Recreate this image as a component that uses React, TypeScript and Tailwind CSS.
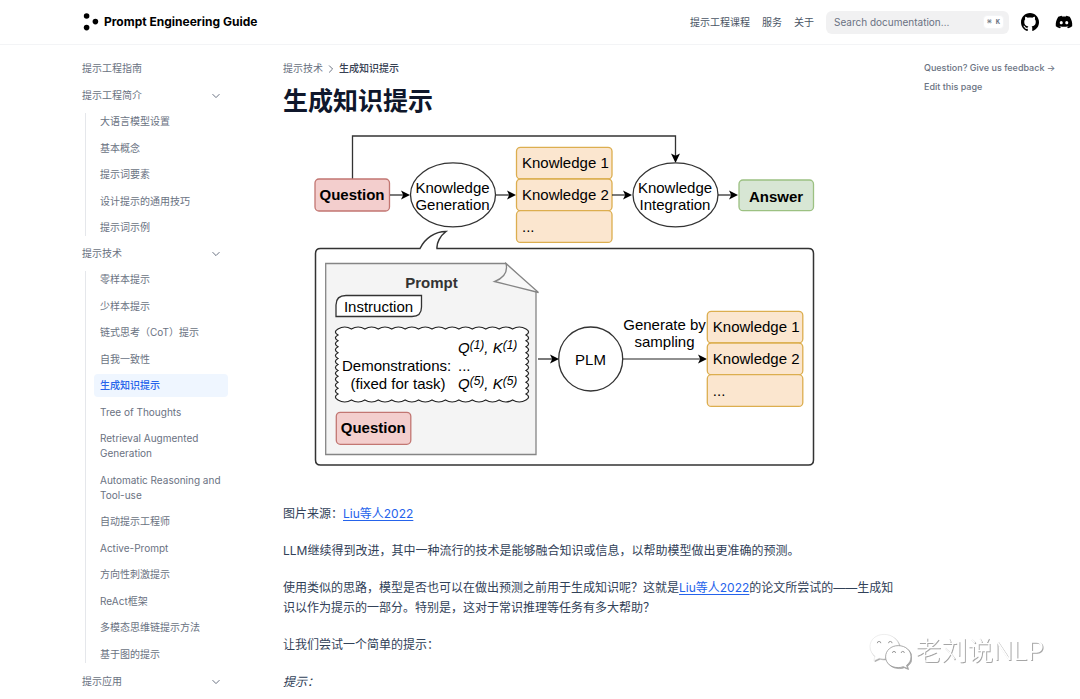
import React from 'react';
import { FaDiscord } from 'react-icons/fa6';

// ============================================
// DATA
// ============================================

interface NavItem {
  label: string;
  children?: string[];
  collapsible?: boolean;
}

const ACTIVE_PAGE = '生成知识提示';

const SIDEBAR: NavItem[] = [
  { label: '提示工程指南' },
  {
    label: '提示工程简介',
    collapsible: true,
    children: ['大语言模型设置', '基本概念', '提示词要素', '设计提示的通用技巧', '提示词示例'],
  },
  {
    label: '提示技术',
    collapsible: true,
    children: [
      '零样本提示',
      '少样本提示',
      '链式思考（CoT）提示',
      '自我一致性',
      '生成知识提示',
      'Tree of Thoughts',
      'Retrieval Augmented Generation',
      'Automatic Reasoning and Tool-use',
      '自动提示工程师',
      'Active-Prompt',
      '方向性刺激提示',
      'ReAct框架',
      '多模态思维链提示方法',
      '基于图的提示',
    ],
  },
  { label: '提示应用', collapsible: true },
];

const TOP_LINKS = ['提示工程课程', '服务', '关于'];

// ============================================
// ICONS
// ============================================

const LogoDots: React.FC = () => (
  <svg className="h-5 w-4" viewBox="0 0 16 20" fill="black" aria-hidden="true">
    <circle cx="3.6" cy="4" r="2.8" />
    <circle cx="12.4" cy="9.6" r="2.8" />
    <circle cx="3.6" cy="15.6" r="2.8" />
  </svg>
);

const GithubIcon: React.FC = () => (
  <svg className="size-[18px]" viewBox="3 3 18 18" fill="currentColor" aria-hidden="true">
    <path d="M12 3C7.0275 3 3 7.12937 3 12.2276C3 16.3109 5.57625 19.7597 9.15374 20.9824C9.60374 21.0631 9.77249 20.7863 9.77249 20.5441C9.77249 20.3249 9.76125 19.5982 9.76125 18.8254C7.5 19.2522 6.915 18.2602 6.735 17.7412C6.63375 17.4759 6.19499 16.6569 5.8125 16.4378C5.4975 16.2647 5.0475 15.838 5.80124 15.8264C6.51 15.8149 7.01625 16.4954 7.18499 16.7723C7.99499 18.1679 9.28875 17.7758 9.80625 17.5335C9.885 16.9337 10.1212 16.53 10.38 16.2993C8.3775 16.0687 6.285 15.2728 6.285 11.7432C6.285 10.7397 6.63375 9.9092 7.20749 9.26326C7.1175 9.03257 6.8025 8.08674 7.2975 6.81794C7.2975 6.81794 8.05125 6.57571 9.77249 7.76377C10.4925 7.55615 11.2575 7.45234 12.0225 7.45234C12.7875 7.45234 13.5525 7.55615 14.2725 7.76377C15.9937 6.56418 16.7475 6.81794 16.7475 6.81794C17.2424 8.08674 16.9275 9.03257 16.8375 9.26326C17.4113 9.9092 17.76 10.7281 17.76 11.7432C17.76 15.2843 15.6563 16.0687 13.6537 16.2993C13.98 16.5877 14.2613 17.1414 14.2613 18.0065C14.2613 19.2407 14.25 20.2326 14.25 20.5441C14.25 20.7863 14.4188 21.0746 14.8688 20.9824C16.6554 20.364 18.2079 19.1866 19.3078 17.6162C20.4077 16.0457 20.9995 14.1611 21 12.2276C21 7.12937 16.9725 3 12 3Z" />
  </svg>
);

const Chevron: React.FC<{ className?: string }> = ({ className = '' }) => (
  <svg className={`size-2 shrink-0 ${className}`} viewBox="0 0 8 8" fill="none" stroke="currentColor" aria-hidden="true">
    <path d="M0.8 2.4L4 5.6L7.2 2.4" strokeLinecap="round" strokeLinejoin="round" />
  </svg>
);

// ============================================
// HEADER
// ============================================

const Header: React.FC = () => (
  <header className="flex h-[45px] items-center border-b border-gray-100 pr-[7px] pl-[83px]">
    <a href="#" className="mr-auto flex items-center gap-[5px] text-[12px] font-bold text-black">
      <LogoDots />
      Prompt Engineering Guide
    </a>
    <nav className="flex gap-3 text-[10px] text-gray-600">
      {TOP_LINKS.map((link) => (
        <a key={link} href="#">
          {link}
        </a>
      ))}
    </nav>
    <label className="ml-3 flex h-[23px] w-[183px] items-center rounded-md bg-[#f1f1f2] pr-[5px] pl-2">
      <input
        type="search"
        placeholder="Search documentation…"
        aria-label="Search documentation"
        className="min-w-0 flex-1 bg-transparent text-[10px] text-gray-700 outline-none placeholder:text-gray-500"
      />
      <kbd className="flex h-[14px] items-center rounded-sm border border-gray-100 bg-white px-[3px] font-['DejaVu_Sans_Mono',monospace] text-[7px] font-bold text-gray-500">
        ⌘ K
      </kbd>
    </label>
    <a href="#" className="ml-3 text-black" aria-label="GitHub">
      <GithubIcon />
    </a>
    <a href="#" className="ml-4 text-black" aria-label="Discord">
      <FaDiscord className="size-[18px]" />
    </a>
  </header>
);

// ============================================
// SIDEBAR
// ============================================

const Sidebar: React.FC = () => (
  <aside className="w-[152px] shrink-0 text-[10px] leading-[15px] text-gray-500">
    <ul>
      {SIDEBAR.map((item) => (
        <li key={item.label} className="odd:pb-1 even:pb-[3px]">
          {item.collapsible ? (
            <button className="flex w-full items-center justify-between px-[6px] py-1 pr-2 text-left">
              {item.label}
              <Chevron />
            </button>
          ) : (
            <a href="#" className="block px-[6px] py-1">
              {item.label}
            </a>
          )}
          {item.children && (
            <ul className="relative mt-[3px] ml-[9px] pl-[9px] before:absolute before:inset-y-[3px] before:left-0 before:w-px before:bg-gray-200">
              {item.children.map((child) => (
                <li key={child} className="not-last:odd:pb-1 not-last:even:pb-[3px]">
                  <a
                    href="#"
                    className={
                      child === ACTIVE_PAGE
                        ? 'block rounded-sm bg-[#eff6ff] px-[6px] py-1 font-medium text-[#2563eb]'
                        : 'block px-[6px] py-1'
                    }
                  >
                    {child}
                  </a>
                </li>
              ))}
            </ul>
          )}
        </li>
      ))}
    </ul>
  </aside>
);

// ============================================
// DIAGRAM
// ============================================

// Closed outline whose four sides are rows of small outward bumps
const scallop = (x: number, y: number, w: number, h: number, nx: number, ny: number, d: number): string => {
  const sx = w / nx;
  const sy = h / ny;
  return [
    `M${x} ${y}`,
    `q${sx / 2} ${-d} ${sx} 0 `.repeat(nx),
    `q${d * 1.3} ${sy / 2} 0 ${sy} `.repeat(ny),
    `q${-sx / 2} ${d} ${-sx} 0 `.repeat(nx),
    `q${-d * 1.3} ${-sy / 2} 0 ${-sy} `.repeat(ny),
    'Z',
  ].join('');
};

const Arrow: React.FC<{ x1: number; x2: number; y: number }> = ({ x1, x2, y }) => (
  <g>
    <path d={`M${x1} ${y}H${x2 - 6}`} stroke="#222" strokeWidth="1.2" />
    <path d={`M${x2} ${y}l-9 -4.5l2.2 4.5l-2.2 4.5Z`} fill="black" />
  </g>
);

const KnowledgeStack: React.FC<{ x: number; y: number }> = ({ x, y }) => (
  <g>
    {['Knowledge 1', 'Knowledge 2', '...'].map((label, i) => (
      <g key={label}>
        <rect x={x} y={y + i * 31.7} width="95.5" height="31.7" rx="4" fill="#fbe6cf" stroke="#dcae4f" strokeWidth="1.3" />
        <text x={x + 5.5} y={y + i * 32 + 21}>
          {label}
        </text>
      </g>
    ))}
  </g>
);

const QuestionBox: React.FC<{ x: number; y: number }> = ({ x, y }) => (
  <g>
    <rect x={x} y={y} width="74.5" height="32" rx="4" fill="#f3cecd" stroke="#c27672" strokeWidth="1.3" />
    <text x={x + 37} y={y + 21} textAnchor="middle" fontWeight="bold">
      Question
    </text>
  </g>
);

const Demo: React.FC<{ n: number; y: number }> = ({ n, y }) => (
  <text x="458" y={y} fontStyle="italic">
    Q
    <tspan dy="-4" fontSize="12">{`(${n})`}</tspan>
    <tspan dy="4">, K</tspan>
    <tspan dy="-4" fontSize="12">{`(${n})`}</tspan>
  </text>
);

const Diagram: React.FC = () => (
  <svg
    viewBox="283 120 590 360"
    className="block w-[590px] max-w-full font-['Liberation_Sans',Arial,sans-serif] text-[15px]"
    fill="black"
    role="img"
    aria-label="Generated knowledge prompting"
  >
    {/* top row */}
    <path d="M352.5 179V136H675.5V156" fill="none" stroke="#333" strokeWidth="1.3" />
    <path d="M675.5 163l-4.5 -9.5l4.5 2.2l4.5 -2.2Z" />
    <QuestionBox x={315} y={179} />
    <Arrow x1={390} x2={410} y={195} />
    <g fill="white" stroke="#333" strokeWidth="1.3">
      <ellipse cx="453" cy="194.8" rx="42.5" ry="32" />
      <ellipse cx="675.5" cy="194.8" rx="42.5" ry="32" />
    </g>
    <g textAnchor="middle">
      <text x="452.5" y="193">Knowledge</text>
      <text x="452.5" y="210">Generation</text>
      <text x="675" y="193">Knowledge</text>
      <text x="675" y="210">Integration</text>
    </g>
    <Arrow x1={496} x2={516} y={195} />
    <KnowledgeStack x={516.5} y={147.3} />
    <Arrow x1={612} x2={632} y={195} />
    <Arrow x1={718} x2={738} y={195} />
    <rect x="739" y="180" width="74.5" height="30.7" rx="4" fill="#d7e6d4" stroke="#9cc182" strokeWidth="1.3" />
    <text x="776" y="202" textAnchor="middle" fontWeight="bold">Answer</text>

    {/* callout frame */}
    <path
      d="M320.5 248.5H420C425 238 435 231.5 446 231.5C440 236 436.5 243 437 248.5H808.5Q813.5 248.5 813.5 253.5V460Q813.5 465 808.5 465H320.5Q315.5 465 315.5 460V253.5Q315.5 248.5 320.5 248.5Z"
      fill="white"
      stroke="#333"
      strokeWidth="1.5"
    />

    {/* prompt sheet */}
    <g stroke="#858585" strokeWidth="1.3">
      <path d="M325.7 263.5H506L536 292V454.5H325.7Z" fill="#f4f4f4" />
      <path d="M506 263.5Q509 276 494.5 281.5L538.5 292.5Z" fill="#f8f8f8" />
    </g>
    <text x="431.5" y="288" textAnchor="middle" fontWeight="bold" fill="#333">Prompt</text>
    <path d="M336 316.5V305Q336 295.5 346 295.5H421.5V307Q421.5 316.5 412 316.5Z" fill="white" stroke="#333" strokeWidth="1.3" />
    <text x="378.5" y="312" textAnchor="middle">Instruction</text>
    <path d={scallop(338, 329, 188, 71, 14, 12, 4)} fill="white" stroke="#222" strokeWidth="1.2" />
    <Demo n={1} y={353} />
    <text x="342" y="371">Demonstrations:</text>
    <text x="458" y="371">...</text>
    <text x="350.5" y="389">(fixed for task)</text>
    <Demo n={5} y={389} />
    <QuestionBox x={336.3} y={412.3} />

    {/* sampling */}
    <Arrow x1={538} x2={559} y={359} />
    <circle cx="590.7" cy="359" r="32" fill="white" stroke="#333" strokeWidth="1.3" />
    <g textAnchor="middle">
      <text x="590.5" y="365">PLM</text>
      <text x="664.5" y="330">Generate by</text>
      <text x="664.5" y="347">sampling</text>
    </g>
    <Arrow x1={623} x2={707} y={359} />
    <KnowledgeStack x={707.3} y={311.3} />
  </svg>
);

// ============================================
// ARTICLE
// ============================================

const PaperLink: React.FC = () => (
  <a href="#" className="text-[#2563eb] underline decoration-1 underline-offset-2">
    Liu等人2022
  </a>
);

const Article: React.FC = () => (
  <main className="min-w-0 flex-1 text-slate-700">
    <div className="flex items-center gap-1 py-1 text-[10px] leading-[15px] text-gray-500">
      <a href="#">提示技术</a>
      <Chevron className="-rotate-90" />
      <span className="font-medium text-gray-700">{ACTIVE_PAGE}</span>
    </div>
    <h1 className="mt-[6px] text-[25px] leading-[30px] font-bold text-slate-900">{ACTIVE_PAGE}</h1>
    <div className="mt-1">
      <Diagram />
    </div>
    <div className="mt-6 flex flex-col gap-[17px] text-[12px] leading-5">
      <p>
        图片来源：
        <PaperLink />
      </p>
      <p>LLM继续得到改进，其中一种流行的技术是能够融合知识或信息，以帮助模型做出更准确的预测。</p>
      <p>
        使用类似的思路，模型是否也可以在做出预测之前用于生成知识呢？这就是
        <PaperLink />
        的论文所尝试的——生成知识以作为提示的一部分。特别是，这对于常识推理等任务有多大帮助？
      </p>
      <p>让我们尝试一个简单的提示：</p>
      <p>
        <em>提示：</em>
      </p>
    </div>
  </main>
);

// ============================================
// WATERMARK
// ============================================

const Watermark: React.FC = () => (
  <div className="pointer-events-none fixed right-9 bottom-[30px] flex items-center gap-1 text-white drop-shadow-[1px_1px_0px_rgba(0,0,0,0.35)]">
    <svg className="h-9 w-[42px]" viewBox="0 0 43 36" aria-hidden="true">
      <path
        d="M15.5 1C7 1 1 6.5 1 13.5C1 17.5 3 21 6 23.5L5 28L10.5 25.5C12.5 26 15 26.3 17 26C17 17.5 23 12.5 31 12.5C29.5 5.500 23 1 15.5 1Z"
        fill="white"
        stroke="#ddd"
        strokeWidth="0.5"
      />
      <path
        d="M30 12.5C22.5 12.5 17 17.5 17 24C17 30.5 22.5 35 30 35C32 35 33.5 34.7 35 34L39.5 36L38.5 32.5C41.5 30.5 43 27.5 43 24C43 17.5 37.5 12.5 30 12.5Z"
        fill="white"
        stroke="#999"
        strokeWidth="0.8"
      />
      <path
        d="M8.5 10a1.8 1.8 0 0 1 3.6 0M20 10a1.8 1.8 0 0 1 3.6 0M24 20a1.6 1.6 0 0 1 3.2 0M33 20a1.6 1.6 0 0 1 3.2 0"
        fill="none"
        stroke="#999"
        strokeWidth="1"
      />
    </svg>
    <span className="text-[26px] leading-9 font-light">老刘说NLP</span>
  </div>
);

// ============================================
// PAGE
// ============================================

const App: React.FC = () => (
  <div lang="zh-CN" className="min-h-screen bg-white font-['Inter','Noto_Sans_CJK_SC',sans-serif]">
    <Header />
    <div className="flex pt-3 pl-[76px]">
      <Sidebar />
      <div className="flex min-w-0 flex-1 pl-[55px]">
        <Article />
        <aside className="ml-[25px] flex w-[156px] shrink-0 flex-col items-start gap-[7px] pt-[5px] text-[9px] leading-3 font-medium text-gray-500">
          <a href="#">Question? Give us feedback →</a>
          <a href="#">Edit this page</a>
        </aside>
      </div>
    </div>
    <Watermark />
  </div>
);

export default App;
